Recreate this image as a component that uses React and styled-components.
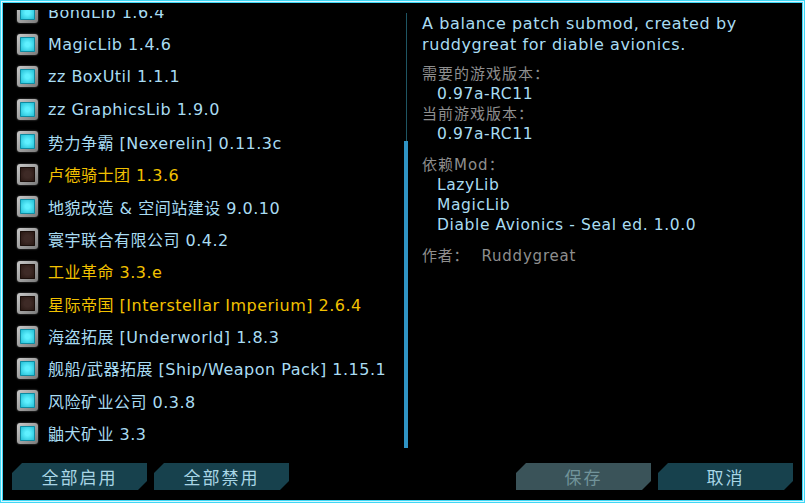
import React from 'react';
import styled, { createGlobalStyle } from 'styled-components';

const GlobalStyle = createGlobalStyle`
  html, body {
    margin: 0;
    padding: 0;
    background: #000;
  }
  * { box-sizing: border-box; }
`;

const font = `"DejaVu Sans", "Noto Sans CJK SC", sans-serif`;

const Frame = styled.div`
  width: 805px;
  height: 503px;
  background: #000;
  border: 1px solid #3fd6f5;
  box-shadow: inset 0 0 0 1px #d8f8ff, inset 0 0 0 2px #3fd6f5;
  padding: 9px 11px 0 11px;
  display: flex;
  flex-direction: column;
  font-family: ${font};
`;

const Main = styled.div`
  display: flex;
  height: 438px;
`;

const ListPane = styled.div`
  width: 381px;
  overflow: hidden;
`;

const List = styled.div`
  margin-top: -14px;
  display: flex;
  flex-direction: column;
`;

const Row = styled.div`
  height: 32.4px;
  display: flex;
  align-items: center;
  padding-left: 5px;
  gap: 10px;
  font-size: 16px;
  letter-spacing: 0.5px;
  white-space: nowrap;
  color: ${p => (p.$off ? '#f2c100' : '#a9dcf2')};
`;

const Check = styled.div`
  width: 21px;
  height: 21px;
  flex: none;
  border-radius: 3px;
  padding: 3px;
  background: linear-gradient(135deg, #c8c8c8, #7a7a7a);
  box-shadow: 0 0 2px #666;
`;

const CheckInner = styled.div`
  width: 100%;
  height: 100%;
  border-radius: 1px;
  background: ${p =>
    p.$off
      ? 'radial-gradient(circle, #3e2a26 30%, #24140f 100%)'
      : 'radial-gradient(circle, #5ff0ff 20%, #17b3cc 100%)'};
  box-shadow: inset 0 0 0 1px ${p => (p.$off ? '#1a0e0a' : '#0f8aa0')};
`;

const Track = styled.div`
  width: 4px;
  margin-left: 11px;
  display: flex;
  flex-direction: column;
  align-items: center;
`;

const TrackLine = styled.div`
  flex: 1;
  width: 1px;
  margin-top: 3px;
  background: #1e5563;
`;

const Thumb = styled.div`
  height: 307px;
  width: 4px;
  background: #2f93c4;
`;

const Details = styled.div`
  flex: 1;
  padding: 3px 0 0 14px;
  display: flex;
  flex-direction: column;
`;

const Desc = styled.div`
  color: #a9dcf2;
  font-size: 16px;
  line-height: 21px;
  letter-spacing: 0.6px;
  margin-bottom: 9px;
`;

const Label = styled.div`
  color: #8e8e8e;
  font-size: 15px;
  line-height: 20px;
  letter-spacing: 1px;
  margin-top: ${p => p.$gap || 0}px;
`;

const Value = styled.div`
  color: #a9dcf2;
  font-size: 15.5px;
  line-height: 20px;
  letter-spacing: 0.6px;
  padding-left: 15px;
`;

const Footer = styled.div`
  display: flex;
  margin-top: 15px;
  gap: 7px;
`;

const Button = styled.button`
  width: 135px;
  height: 27px;
  border: none;
  padding: 0;
  font-family: ${font};
  font-size: 17px;
  letter-spacing: 2px;
  color: ${p => (p.$disabled ? '#71939a' : '#a9d6e6')};
  background: ${p => (p.$disabled ? '#3a5359' : '#17414d')};
  clip-path: polygon(10px 0, 100% 0, 100% calc(100% - 9px), calc(100% - 9px) 100%, 0 100%, 0 10px);
  margin-left: ${p => (p.$push ? 'auto' : '0')};
  cursor: pointer;
`;

const Author = styled.div`
  display: flex;
  gap: 12px;
  margin-top: 11px;
  color: #8e8e8e;
  font-size: 15px;
  line-height: 20px;
  letter-spacing: 0.8px;
`;

const mods = [
  { name: 'BondLib 1.6.4' },
  { name: 'MagicLib 1.4.6' },
  { name: 'zz BoxUtil 1.1.1' },
  { name: 'zz GraphicsLib 1.9.0' },
  { name: '势力争霸 [Nexerelin] 0.11.3c' },
  { name: '卢德骑士团 1.3.6', off: true },
  { name: '地貌改造 & 空间站建设 9.0.10' },
  { name: '寰宇联合有限公司 0.4.2', off: true, blue: true },
  { name: '工业革命 3.3.e', off: true },
  { name: '星际帝国 [Interstellar Imperium] 2.6.4', off: true },
  { name: '海盗拓展 [Underworld] 1.8.3' },
  { name: '舰船/武器拓展 [Ship/Weapon Pack] 1.15.1' },
  { name: '风险矿业公司 0.3.8' },
  { name: '鼬犬矿业 3.3' },
];

export default function App() {
  return (
    <>
      <GlobalStyle />
      <Frame>
        <Main>
          <ListPane>
            <List>
              {mods.map(m => (
                <Row key={m.name} $off={m.off && !m.blue}>
                  <Check>
                    <CheckInner $off={m.off} />
                  </Check>
                  {m.name}
                </Row>
              ))}
            </List>
          </ListPane>
          <Track>
            <TrackLine />
            <Thumb />
          </Track>
          <Details>
            <Desc>
              A balance patch submod, created by
              <br />
              ruddygreat for diable avionics.
            </Desc>
            <Label>需要的游戏版本：</Label>
            <Value>0.97a-RC11</Value>
            <Label>当前游戏版本：</Label>
            <Value>0.97a-RC11</Value>
            <Label $gap={11}>依赖Mod：</Label>
            <Value>LazyLib</Value>
            <Value>MagicLib</Value>
            <Value>Diable Avionics - Seal ed. 1.0.0</Value>
            <Author>
              <span>作者：</span>
              <span>Ruddygreat</span>
            </Author>
          </Details>
        </Main>
        <Footer>
          <Button>全部启用</Button>
          <Button>全部禁用</Button>
          <Button $disabled $push>保存</Button>
          <Button>取消</Button>
        </Footer>
      </Frame>
    </>
  );
}
